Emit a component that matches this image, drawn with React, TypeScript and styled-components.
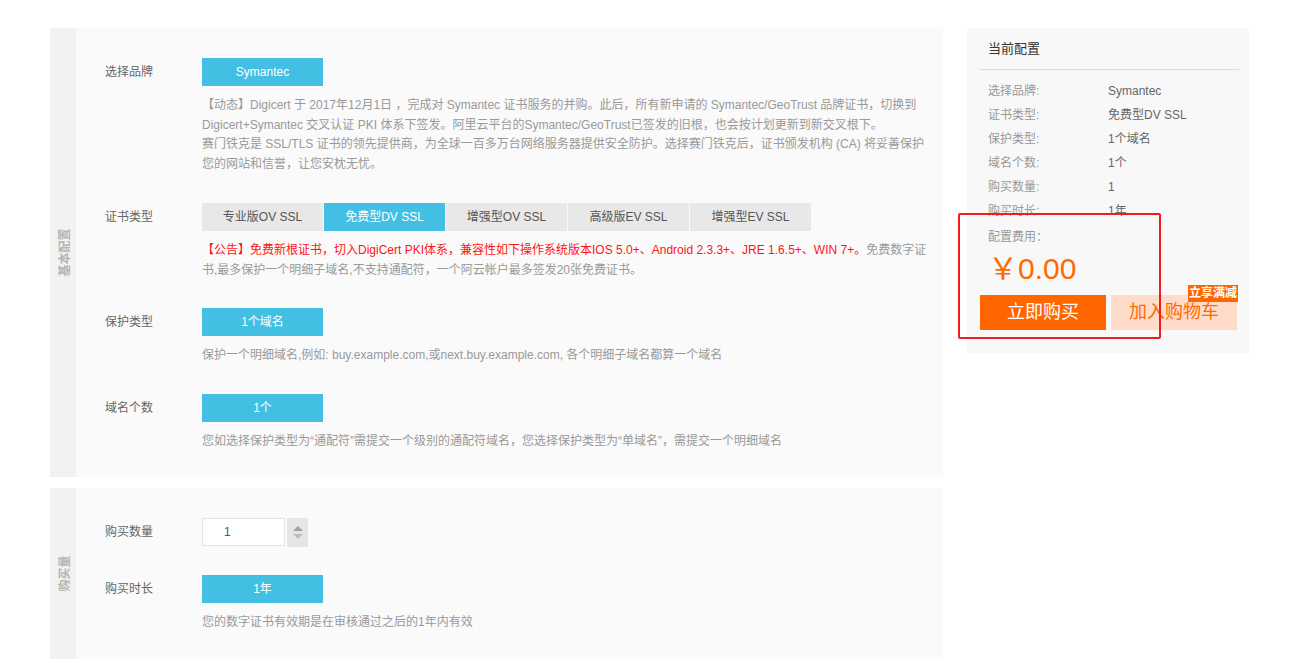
import React from "react"
import styled, { createGlobalStyle } from "styled-components"

const GlobalStyle = createGlobalStyle`
    html, body {
        margin:0;
        padding:0;
        background:#fff;
        font-family:"Liberation Sans", "Noto Sans CJK SC", sans-serif;
        font-size:12px;
    }
`

const Page = styled.div`
    display:flex;
    align-items:flex-start;
    gap:24px;
    padding:28px 0 0 50px;
    width:1200px;
`
const MainCol = styled.div`
    width:893px;
    display:flex;
    flex-direction:column;
    gap:11px;
`
const Panel = styled.div`
    display:flex;
    background:#fafafa;
`
const SideStrip = styled.div`
    width:26px;
    flex-shrink:0;
    background:#f2f2f2;
    display:flex;
    align-items:center;
    justify-content:center;
`
const SideText = styled.span`
    display:block;
    white-space:nowrap;
    transform:rotate(-90deg);
    color:#b4b4b4;
    font-weight:bold;
    font-size:12px;
`
const PanelBody = styled.div`
    flex:1;
    padding:30px 0 26px 29px;
    display:flex;
    flex-direction:column;
    gap:28px;
`
const Row = styled.div`
    display:flex;
`
const Label = styled.div`
    width:97px;
    flex-shrink:0;
    height:28px;
    line-height:28px;
    color:#666;
`
const Field = styled.div`
    flex:1;
    padding-right:13px;
`
const Options = styled.div`
    display:flex;
    gap:1px;
`
const Option = styled.div<{ active?: boolean }>`
    width:121px;
    height:28px;
    line-height:28px;
    text-align:center;
    background:${(p) => (p.active ? "#42bfe3" : "#e8e8e8")};
    color:${(p) => (p.active ? "#fff" : "#555")};
`
const Desc = styled.div<{ extra?: number }>`
    margin-top:10px;
    margin-bottom:${(p) => p.extra ?? 0}px;
    line-height:19.5px;
    color:#999;
`
const Red = styled.span`
    color:#ff1515;
`
const NumberBox = styled.div`
    display:flex;
    gap:2px;
    height:29px;
`
const NumberInput = styled.div`
    width:83px;
    height:28px;
    box-sizing:border-box;
    border:1px solid #e3e3e3;
    background:#fff;
    padding-left:21px;
    line-height:26px;
    color:#555;
`
const Spinner = styled.div`
    width:21px;
    height:29px;
    background:#e6e6e6;
    display:flex;
    flex-direction:column;
    align-items:center;
    justify-content:center;
    gap:3px;
`
const Arrow = styled.div<{ down?: boolean }>`
    width:0;
    height:0;
    border-left:5px solid transparent;
    border-right:5px solid transparent;
    ${(p) => (p.down ? "border-top:5px solid #bdbdbd;" : "border-bottom:5px solid #a0a0a0;")}
`

const Summary = styled.div`
    position:relative;
    width:282px;
    box-sizing:border-box;
    background:#f8f8f8;
    padding:0 10px 23px 12px;
`
const SummaryTitle = styled.div`
    height:41px;
    line-height:41px;
    padding-left:9px;
    font-size:13px;
    color:#333;
    border-bottom:1px solid #dcdcdc;
`
const SummaryList = styled.div`
    padding:9px 0 0 9px;
`
const SummaryRow = styled.div`
    display:flex;
    line-height:24px;
`
const SummaryKey = styled.div`
    width:120px;
    color:#999;
`
const SummaryValue = styled.div`
    color:#666;
`
const FeeLabel = styled.div`
    padding-left:9px;
    margin-top:2px;
    line-height:24px;
    color:#999;
`
const Price = styled.div`
    padding-left:9px;
    font-size:30px;
    line-height:40px;
    color:#ff6a00;
`
const Actions = styled.div`
    display:flex;
    gap:5px;
    margin-top:6px;
    padding-left:1px;
`
const BuyButton = styled.div<{ light?: boolean }>`
    position:relative;
    width:126px;
    height:35px;
    line-height:35px;
    text-align:center;
    font-size:18px;
    background:${(p) => (p.light ? "#ffdcca" : "#ff6600")};
    color:${(p) => (p.light ? "#ff6a00" : "#fff")};
`
const Badge = styled.span`
    position:absolute;
    top:-10px;
    right:-1px;
    height:17px;
    line-height:17px;
    padding:0 1px;
    background:#ff6600;
    color:#fff;
    font-size:12px;
    font-weight:bold;
`
const Highlight = styled.div`
    position:absolute;
    left:-9px;
    top:185px;
    width:203px;
    height:126px;
    box-sizing:border-box;
    border:2px solid #f31b1b;
    border-radius:2px;
    pointer-events:none;
`

const summary: [string, string][] = [
    ["选择品牌:", "Symantec"],
    ["证书类型:", "免费型DV SSL"],
    ["保护类型:", "1个域名"],
    ["域名个数:", "1个"],
    ["购买数量:", "1"],
    ["购买时长:", "1年"],
]

const certTypes = ["专业版OV SSL", "免费型DV SSL", "增强型OV SSL", "高级版EV SSL", "增强型EV SSL"]

export default function App() {
    return (
        <>
            <GlobalStyle />
            <Page>
                <MainCol>
                    <Panel>
                        <SideStrip><SideText>基本配置</SideText></SideStrip>
                        <PanelBody>
                            <Row>
                                <Label>选择品牌</Label>
                                <Field>
                                    <Options><Option active>Symantec</Option></Options>
                                    <Desc extra={1}>
                                        【动态】Digicert 于 2017年12月1日 ，完成对 Symantec 证书服务的并购。此后，所有新申请的 Symantec/GeoTrust 品牌证书，切换到 Digicert+Symantec 交叉认证 PKI 体系下签发。阿里云平台的Symantec/GeoTrust已签发的旧根，也会按计划更新到新交叉根下。<br />
                                        赛门铁克是 SSL/TLS 证书的领先提供商，为全球一百多万台网络服务器提供安全防护。选择赛门铁克后，证书颁发机构 (CA) 将妥善保护您的网站和信誉，让您安枕无忧。
                                    </Desc>
                                </Field>
                            </Row>
                            <Row>
                                <Label>证书类型</Label>
                                <Field>
                                    <Options>
                                        {certTypes.map((t) => (
                                            <Option key={t} active={t === "免费型DV SSL"}>{t}</Option>
                                        ))}
                                    </Options>
                                    <Desc>
                                        <Red>【公告】免费新根证书，切入DigiCert PKI体系，兼容性如下操作系统版本IOS 5.0+、Android 2.3.3+、JRE 1.6.5+、WIN 7+。</Red>免费数字证书,最多保护一个明细子域名,不支持通配符，一个阿云帐户最多签发20张免费证书。
                                    </Desc>
                                </Field>
                            </Row>
                            <Row>
                                <Label>保护类型</Label>
                                <Field>
                                    <Options><Option active>1个域名</Option></Options>
                                    <Desc>保护一个明细域名,例如: buy.example.com,或next.buy.example.com, 各个明细子域名都算一个域名</Desc>
                                </Field>
                            </Row>
                            <Row>
                                <Label>域名个数</Label>
                                <Field>
                                    <Options><Option active>1个</Option></Options>
                                    <Desc>您如选择保护类型为“通配符”需提交一个级别的通配符域名，您选择保护类型为“单域名”，需提交一个明细域名</Desc>
                                </Field>
                            </Row>
                        </PanelBody>
                    </Panel>
                    <Panel>
                        <SideStrip><SideText>购买量</SideText></SideStrip>
                        <PanelBody>
                            <Row>
                                <Label>购买数量</Label>
                                <Field>
                                    <NumberBox>
                                        <NumberInput>1</NumberInput>
                                        <Spinner><Arrow /><Arrow down /></Spinner>
                                    </NumberBox>
                                </Field>
                            </Row>
                            <Row>
                                <Label>购买时长</Label>
                                <Field>
                                    <Options><Option active>1年</Option></Options>
                                    <Desc>您的数字证书有效期是在审核通过之后的1年内有效</Desc>
                                </Field>
                            </Row>
                        </PanelBody>
                    </Panel>
                </MainCol>
                <Summary>
                    <SummaryTitle>当前配置</SummaryTitle>
                    <SummaryList>
                        {summary.map(([k, v]) => (
                            <SummaryRow key={k}>
                                <SummaryKey>{k}</SummaryKey>
                                <SummaryValue>{v}</SummaryValue>
                            </SummaryRow>
                        ))}
                    </SummaryList>
                    <FeeLabel>配置费用：</FeeLabel>
                    <Price>￥0.00</Price>
                    <Actions>
                        <BuyButton>立即购买</BuyButton>
                        <BuyButton light>加入购物车<Badge>立享满减</Badge></BuyButton>
                    </Actions>
                    <Highlight />
                </Summary>
            </Page>
        </>
    )
}
